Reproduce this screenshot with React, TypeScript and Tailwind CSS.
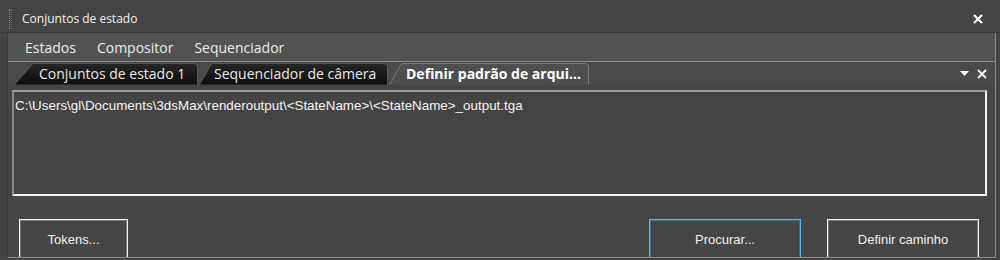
import React from 'react';

const ui = { fontFamily: '"Open Sans", "Noto Sans", sans-serif' };
const arial = { fontFamily: '"Liberation Sans", Arial, sans-serif' };

function Tab({
  label,
  width,
  slope,
  pad,
  active,
}: {
  label: string;
  width: number;
  slope: number;
  pad: number;
  active?: boolean;
}) {
  return (
    <div className="relative h-[22px] shrink-0" style={{ width }}>
      <svg className="absolute inset-0" width={width} height={22}>
        <defs>
          <linearGradient id="tabdark" x1="0" y1="0" x2="0" y2="1">
            <stop offset="0" stopColor="#262626" />
            <stop offset="1" stopColor="#0e0e0e" />
          </linearGradient>
        </defs>
        <path
          d={`M0.5 21.5 L${slope} 1.5 Q${slope + 0.5} 0.5 ${slope + 2} 0.5 L${width - 5} 0.5 Q${width - 1.5} 0.5 ${width - 1.5} 4 L${width - 1.5} 21.5`}
          fill={active ? '#4f4f4f' : 'url(#tabdark)'}
          stroke={active ? '#7c7c7c' : '#5a5a5a'}
        />
      </svg>
      <span
        className={`relative block leading-[22px] text-[14px] whitespace-nowrap ${
          active ? 'font-bold text-white' : 'text-[#e8e8e8]'
        }`}
        style={{ ...ui, paddingLeft: pad }}
      >
        {label}
      </span>
    </div>
  );
}

function Button({ label, width, focused }: { label: string; width: number; focused?: boolean }) {
  return (
    <div
      className={`h-[42px] flex items-center justify-center text-[13px] text-[#f0f0f0] border ${
        focused ? 'border-[#5cb8ea] shadow-[inset_0_0_0_1px_#3b6f8c]' : 'border-[#f2f2f2] shadow-[inset_0_0_0_1px_#7a7a7a]'
      }`}
      style={{ width, ...arial }}
    >
      {label}
    </div>
  );
}

export default function App() {
  return (
    <div className="w-[1000px] h-[260px] bg-[#444444] overflow-hidden">
      {/* title bar */}
      <div className="h-[33px] pt-[6px] flex items-center border-b border-[#3a3a3a]">
        <div className="ml-[9px] h-[20px] w-[3px] flex gap-[1px]">
          <div className="w-px h-full border-l border-dotted border-[#9a9a9a]" />
          <div className="w-px h-full border-l border-dotted border-[#6a6a6a]" />
        </div>
        <span className="ml-[10px] text-[12px] text-[#f2f2f2]" style={ui}>
          Conjuntos de estado
        </span>
        <svg className="ml-auto mr-[17px]" width="10" height="10" viewBox="0 0 10 10">
          <path d="M1 1 L9 9 M9 1 L1 9" stroke="#ffffff" strokeWidth="2.2" />
        </svg>
      </div>

      <div className="ml-[7px] w-[989px] h-[225px] border-l border-[#3a3a3a] border-r border-r-[#8a8a8a] border-b border-b-[#8a8a8a] flex flex-col">
        {/* menu */}
        <div className="h-[28px] shrink-0 bg-[#535353] flex items-center text-[14px] text-[#ececec]" style={ui}>
          <span className="ml-[17px]">Estados</span>
          <span className="ml-[21px]">Compositor</span>
          <span className="ml-[21px]">Sequenciador</span>
        </div>

        {/* tabs panel */}
        <div className="flex-1 min-h-0 border-t border-[#8c8c8c] bg-[#4a4a4a] flex flex-col">
          <div className="h-[23px] shrink-0 flex items-end pl-[6px] pr-[8px]">
            <Tab label="Conjuntos de estado 1" width={185} slope={18} pad={25} />
            <Tab label="Sequenciador de câmera" width={190} slope={12} pad={15} />
            <Tab label="Definir padrão de arqui..." width={201} slope={12} pad={17} active />
            <div className="ml-auto self-center flex items-center gap-[8px]">
              <svg width="9" height="5" viewBox="0 0 9 5">
                <path d="M0 0 H9 L4.5 5 Z" fill="#ffffff" />
              </svg>
              <svg width="10" height="10" viewBox="0 0 10 10">
                <path d="M1 1 L9 9 M9 1 L1 9" stroke="#ffffff" strokeWidth="1.8" />
              </svg>
            </div>
          </div>
          <div className="flex-1 min-h-0 overflow-hidden bg-[#464646] pt-[5px]">
            <div className="ml-[4px] w-[975px] h-[106px] bg-[#444444] border-t-2 border-l-2 border-t-[#9c9c9c] border-l-[#8a8a8a] border-b-2 border-r-2 border-b-[#f4f4f4] border-r-[#f4f4f4] px-[1px]">
              <span className="text-[13.4px] text-[#f4f4f4]" style={arial}>
                C:\Users\gl\Documents\3dsMax\renderoutput\&lt;StateName&gt;\&lt;StateName&gt;_output.tga
              </span>
            </div>
            <div className="mt-[23px] flex pl-[11px]">
              <Button label="Tokens..." width={109} />
              <div className="ml-[521px]">
                <Button label="Procurar..." width={152} focused />
              </div>
              <div className="ml-[26px]">
                <Button label="Definir caminho" width={152} />
              </div>
            </div>
          </div>
        </div>
      </div>
    </div>
  );
}
